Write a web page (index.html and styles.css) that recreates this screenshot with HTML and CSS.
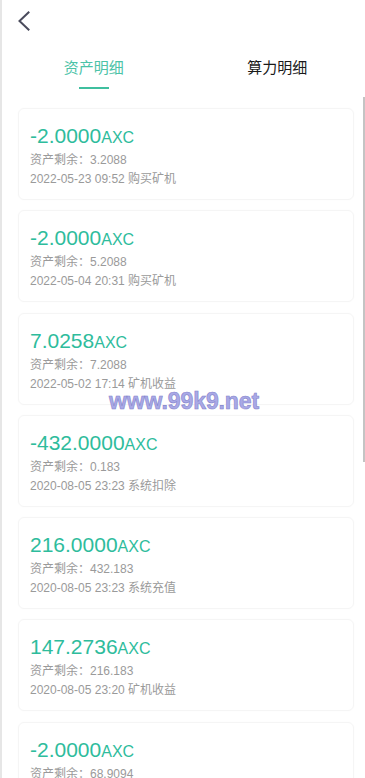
FILE: index.html
```html
<!DOCTYPE html>
<html lang="zh-CN">
<head>
<meta charset="utf-8">
<meta name="viewport" content="width=device-width, initial-scale=1">
<title>资产明细</title>
<link rel="stylesheet" href="styles.css">
</head>
<body>
<div class="page">
  <header class="header">
    <svg class="back" width="14" height="20" viewBox="0 0 14 20" aria-hidden="true">
      <path d="M11.5 1.5 L2.5 10 L11.5 18.5" fill="none" stroke="#4a4b5c" stroke-width="2" stroke-linecap="square" stroke-linejoin="miter"/>
    </svg>
  </header>
  <nav class="tabs">
    <div class="tab active"><span class="tab-label">资产明细</span><span class="tab-bar"></span></div>
    <div class="tab"><span class="tab-label">算力明细</span></div>
  </nav>
  <main class="list">
    <div class="card">
      <div class="amount">-2.0000<span class="unit">AXC</span></div>
      <div class="meta">资产剩余：3.2088</div>
      <div class="meta">2022-05-23 09:52 购买矿机</div>
    </div>
    <div class="card">
      <div class="amount">-2.0000<span class="unit">AXC</span></div>
      <div class="meta">资产剩余：5.2088</div>
      <div class="meta">2022-05-04 20:31 购买矿机</div>
    </div>
    <div class="card">
      <div class="amount">7.0258<span class="unit">AXC</span></div>
      <div class="meta">资产剩余：7.2088</div>
      <div class="meta">2022-05-02 17:14 矿机收益</div>
    </div>
    <div class="card">
      <div class="amount">-432.0000<span class="unit">AXC</span></div>
      <div class="meta">资产剩余：0.183</div>
      <div class="meta">2020-08-05 23:23 系统扣除</div>
    </div>
    <div class="card">
      <div class="amount">216.0000<span class="unit">AXC</span></div>
      <div class="meta">资产剩余：432.183</div>
      <div class="meta">2020-08-05 23:23 系统充值</div>
    </div>
    <div class="card">
      <div class="amount">147.2736<span class="unit">AXC</span></div>
      <div class="meta">资产剩余：216.183</div>
      <div class="meta">2020-08-05 23:20 矿机收益</div>
    </div>
    <div class="card">
      <div class="amount">-2.0000<span class="unit">AXC</span></div>
      <div class="meta">资产剩余：68.9094</div>
      <div class="meta">2020-08-05 23:18 购买矿机</div>
    </div>
  </main>
  <div class="scroll-thumb"></div>
  <div class="watermark">www.99k9.net</div>
</div>
</body>
</html>
```

FILE: styles.css
```css
html, body {
  margin: 0;
  padding: 0;
  height: 778px;
  overflow: hidden;
  background: #ffffff;
}

body {
  font-family: "Liberation Sans", "Noto Sans CJK SC", sans-serif;
}

.page {
  position: relative;
  height: 778px;
  border-left: 2px solid #e6e6e6;
  box-sizing: border-box;
  overflow: hidden;
}

.header {
  height: 40px;
  display: flex;
  align-items: center;
  padding-left: 15px;
  padding-top: 1px;
  box-sizing: border-box;
}

.back {
  display: block;
}

.tabs {
  display: flex;
  padding-top: 17px;
  width: 367px;
}

.tab {
  flex: 1;
  display: flex;
  flex-direction: column;
  align-items: center;
}

.tab-label {
  font-size: 15px;
  line-height: 22px;
  height: 22px;
  color: #1a1a1a;
}

.tab.active .tab-label {
  color: #4cc3a7;
}

.tab-bar {
  width: 30px;
  height: 2px;
  margin-top: 8px;
  background: #3fbf9f;
}

.list {
  padding: 19px 11px 0 16px;
  display: flex;
  flex-direction: column;
  gap: 10.3px;
}

.card {
  border: 1px solid #f5f5f5;
  border-radius: 6px;
  padding: 12px 11px 10px;
  box-shadow: 0 0 3px rgba(0, 0, 0, 0.015);
}

.amount {
  font-size: 21px;
  line-height: 30px;
  height: 30px;
  color: #2ebc9c;
  white-space: nowrap;
}

.unit {
  font-size: 16px;
}

.meta {
  font-size: 12px;
  line-height: 19px;
  height: 19px;
  color: #9a9a9a;
  white-space: nowrap;
}

.meta-cjk {
  font-size: 11px;
}

.scroll-thumb {
  position: absolute;
  top: 97px;
  right: 0;
  width: 2px;
  height: 365px;
  background: #c4c4c4;
}

.watermark {
  position: absolute;
  left: 107px;
  top: 390px;
  font-family: "Liberation Sans", sans-serif;
  font-weight: bold;
  font-size: 23px;
  line-height: 23px;
  color: #a9a9e6;
  -webkit-text-stroke: 0.6px #8484cc;
  letter-spacing: -0.1px;
}
```
